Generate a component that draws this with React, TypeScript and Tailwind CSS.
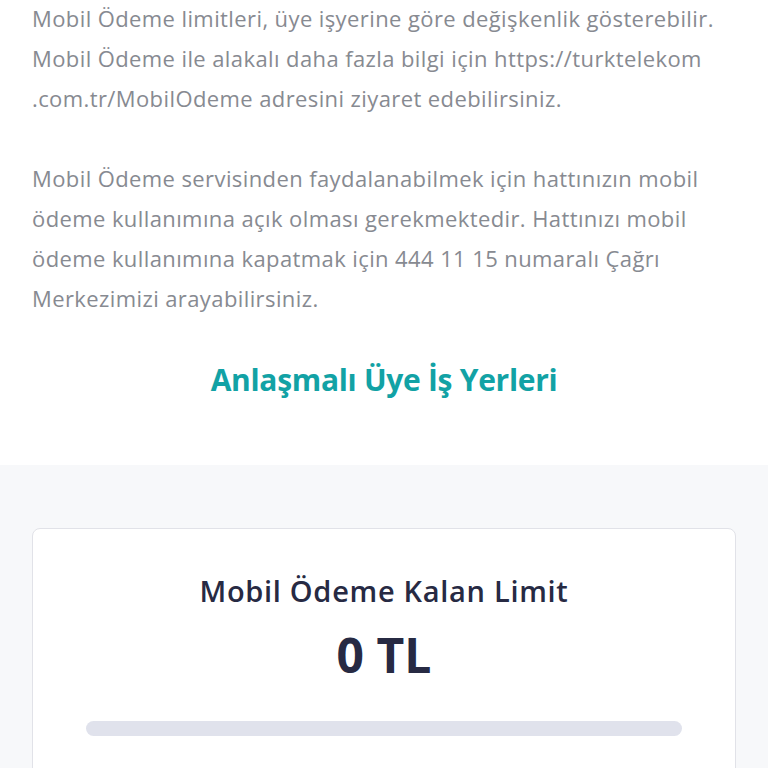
export default function App() {
  return (
    <div className="w-[768px] h-[768px] overflow-hidden bg-white" style={{ fontFamily: "'Open Sans', Lato, sans-serif" }}>
      {/* Info text */}
      <div className="px-8 -mt-[2px] text-[22px] leading-[40px] tracking-[0.4px] text-[#878a91] whitespace-nowrap">
        <p>
          Mobil Ödeme limitleri, üye işyerine göre değişkenlik gösterebilir.
          <br />
          Mobil Ödeme ile alakalı daha fazla bilgi için https://turktelekom
          <br />
          .com.tr/MobilOdeme adresini ziyaret edebilirsiniz.
        </p>
        <p className="mt-10">
          Mobil Ödeme servisinden faydalanabilmek için hattınızın mobil
          <br />
          ödeme kullanımına açık olması gerekmektedir. Hattınızı mobil
          <br />
          ödeme kullanımına kapatmak için 444 11 15 numaralı Çağrı
          <br />
          Merkezimizi arayabilirsiniz.
        </p>
      </div>

      <h2 className="mt-[42px] text-center text-[30px] font-bold text-[#12a2a5] leading-[40px] tracking-[-0.3px]">
        Anlaşmalı Üye İş Yerleri
      </h2>

      {/* Limit section */}
      <div className="mt-[65px] bg-[#f7f8fa] pt-[63px] px-8 h-[400px]">
        <div className="bg-white border border-[#e1e2e8] rounded-lg px-[53px] pt-[40px] pb-10">
          <h3 className="text-center text-[29px] font-semibold text-[#272a43] leading-[44px] tracking-[0.7px]">Mobil Ödeme Kalan Limit</h3>
          <div className="mt-[14px] text-center text-[48px] font-bold text-[#272a43] leading-[56px]">0 TL</div>
          <div className="mt-[38px] h-[15px] rounded-full bg-[#e0e2ec]" />
        </div>
      </div>
    </div>
  );
}
